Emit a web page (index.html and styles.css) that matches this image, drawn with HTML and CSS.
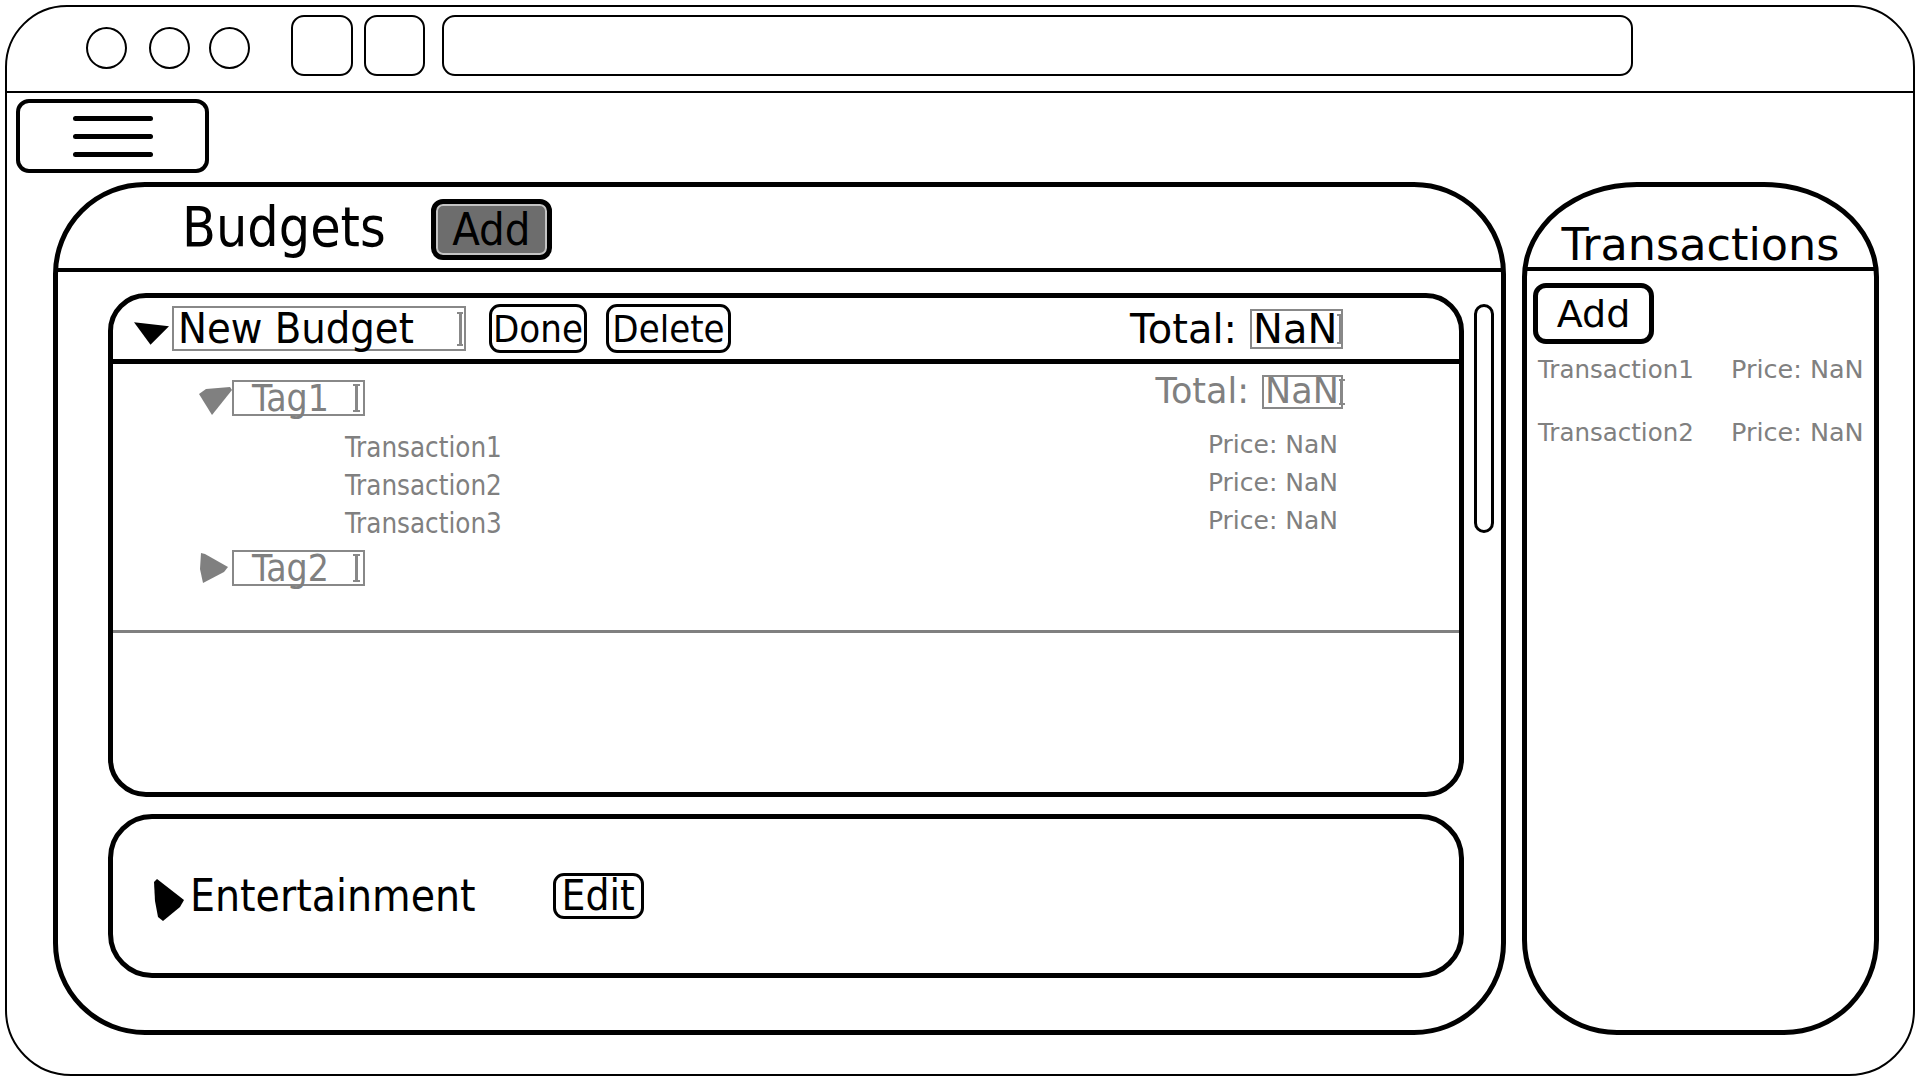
FILE: index.html
```html
<!DOCTYPE html>
<html lang="en">
<head>
<meta charset="utf-8">
<title>Budgets</title>
<link rel="stylesheet" href="styles.css">
</head>
<body>
<div class="window">
  <div class="titlebar">
    <span class="dot"></span><span class="dot d2"></span><span class="dot d3"></span>
    <span class="navbtn"></span><span class="navbtn n2"></span>
    <span class="address"></span>
  </div>
  <div class="page">
    <div class="menu"><span class="bar"></span><span class="bar"></span><span class="bar"></span></div>
    <div class="panels">
      <section class="budgets">
        <header class="budgets-head">
          <h1 class="budgets-title">Budgets</h1>
          <span class="add-dark">Add</span>
        </header>
        <div class="budgets-body">
          <div class="cards">
            <div class="card card-open">
              <div class="card-head">
                <svg class="tri-down" viewBox="0 0 36 23"><polygon points="0,0 36,4 17,23" fill="#000"/></svg>
                <span class="input name">New Budget<i class="caret"></i></span>
                <span class="btn done">Done</span>
                <span class="btn delete">Delete</span>
                <span class="total">Total:<span class="input nan">NaN<i class="caret"></i></span></span>
              </div>
              <div class="card-body">
                <div class="tag-row">
                  <svg class="tri-tag" viewBox="0 0 33 28"><polygon points="0,7 7,2 31,0 33,3 13,28" fill="#808080"/></svg>
                  <span class="input tag-input">Tag1<i class="caret"></i></span>
                  <span class="tag-total">Total:<span class="input nan-sm">NaN<i class="caret"></i></span></span>
                </div>
                <div class="tx-list">
                  <div class="tx"><span class="tx-name">Transaction1</span><span class="tx-price">Price: NaN</span></div>
                  <div class="tx"><span class="tx-name">Transaction2</span><span class="tx-price">Price: NaN</span></div>
                  <div class="tx"><span class="tx-name">Transaction3</span><span class="tx-price">Price: NaN</span></div>
                </div>
                <div class="tag-row tag-row2">
                  <svg class="tri-tag-right" viewBox="0 0 28 30"><polygon points="1,0 5,1 28,14 24,19 3,30 0,16" fill="#808080"/></svg>
                  <span class="input tag-input">Tag2<i class="caret"></i></span>
                </div>
                <div class="sep"></div>
              </div>
            </div>
            <div class="card card-closed">
              <svg class="tri-ent" viewBox="0 0 32 42"><polygon points="1,3 4,0 31,21 27,28 10,42 5,38 2,22" fill="#000"/></svg>
              <span class="ent-name">Entertainment</span>
              <span class="btn edit">Edit</span>
            </div>
          </div>
          <div class="scrollbar"></div>
        </div>
      </section>
      <section class="transactions">
        <header class="tx-head"><h2 class="tx-title">Transactions</h2></header>
        <span class="add-light">Add</span>
        <div class="side-list">
          <span class="side-name">Transaction1</span><span class="side-price">Price: NaN</span>
          <span class="side-name">Transaction2</span><span class="side-price">Price: NaN</span>
        </div>
      </section>
    </div>
  </div>
</div>
</body>
</html>
```

FILE: styles.css
```css
* { box-sizing: border-box; }
html, body { margin: 0; padding: 0; }
body {
  width: 1920px;
  height: 1080px;
  background: #fff;
  color: #000;
  font-family: "DejaVu Sans", sans-serif;
  overflow: hidden;
}

.window {
  margin: 5px;
  width: 1910px;
  height: 1071px;
  border: 2px solid #000;
  border-radius: 62px 62px 66px 66px;
  display: flex;
  flex-direction: column;
}

/* browser chrome */
.titlebar {
  flex: none;
  height: 86px;
  border-bottom: 2px solid #000;
  display: flex;
  align-items: flex-start;
  padding-left: 79px;
}
.dot {
  flex: none;
  width: 41px;
  height: 42px;
  margin-top: 20px;
  border: 2px solid #000;
  border-radius: 50%;
}
.dot.d2 { margin-left: 22px; }
.dot.d3 { margin-left: 19px; }
.navbtn {
  flex: none;
  width: 62px;
  height: 61px;
  margin-top: 8px;
  margin-left: 41px;
  border: 2px solid #000;
  border-radius: 13px;
}
.navbtn.n2 { width: 61px; margin-left: 11px; }
.address {
  flex: none;
  width: 1191px;
  height: 61px;
  margin-top: 8px;
  margin-left: 17px;
  border: 2px solid #000;
  border-radius: 13px;
}

.page {
  display: flex;
  flex-direction: column;
  padding: 6px 0 0 9px;
}
.menu {
  width: 193px;
  height: 74px;
  border: 4px solid #000;
  border-radius: 13px;
  display: flex;
  flex-direction: column;
  align-items: center;
  justify-content: center;
  gap: 13px;
}
.bar {
  width: 80px;
  height: 5px;
  background: #000;
  border-radius: 3px;
}

.panels {
  display: flex;
  gap: 16px;
  margin: 9px 0 0 37px;
  height: 853px;
}

/* budgets panel */
.budgets {
  flex: none;
  width: 1453px;
  height: 853px;
  border: 5px solid #000;
  border-radius: 92px;
  display: flex;
  flex-direction: column;
}
.budgets-head {
  flex: none;
  height: 85px;
  border-bottom: 4px solid #000;
  display: flex;
  align-items: center;
  padding-left: 124px;
}
.budgets-title {
  margin: 0;
  font-family: "DejaVu Sans Condensed", "DejaVu Sans", sans-serif;
  font-stretch: semi-condensed;
  font-weight: normal;
  font-size: 55px;
  line-height: 1;
}
.add-dark {
  margin-left: 45px;
  width: 121px;
  height: 61px;
  margin-top: 4px;
  border: 5px solid #000;
  border-radius: 12px;
  background: #6d6d6d;
  box-shadow: inset 0 0 0 2px #c4c4c4;
  display: flex;
  align-items: center;
  justify-content: center;
  font-family: "DejaVu Sans Condensed", "DejaVu Sans", sans-serif;
  font-stretch: semi-condensed;
  font-size: 45px;
  line-height: 1;
}

.budgets-body {
  display: flex;
  align-items: flex-start;
  padding: 21px 0 0 50px;
}
.cards {
  flex: none;
  width: 1356px;
  display: flex;
  flex-direction: column;
  gap: 17px;
}
.card {
  border: 5px solid #000;
}
.card-open {
  height: 504px;
  border-radius: 38px;
  display: flex;
  flex-direction: column;
}
.card-head {
  flex: none;
  height: 66px;
  border-bottom: 5px solid #000;
  display: flex;
  align-items: center;
  padding: 0 116px 0 21px;
}
.tri-down {
  flex: none;
  width: 35px;
  height: 23px;
  margin-top: 9px;
}
.input {
  flex: none;
  border: 2px solid #888;
  display: flex;
  align-items: center;
  line-height: 1;
}
.caret {
  flex: none;
  margin-left: auto;
  margin-right: 1px;
  width: 7px;
  height: 26px;
  border-top: 2px solid #888;
  border-bottom: 2px solid #888;
  background: linear-gradient(#888, #888) center / 3px 100% no-repeat;
}
.name {
  width: 294px;
  height: 45px;
  margin-left: 3px;
  padding-left: 4px;
  font-family: "DejaVu Sans Condensed", "DejaVu Sans", sans-serif;
  font-stretch: semi-condensed;
  font-size: 43px;
}
.name .caret { height: 34px; width: 6px; }
.btn {
  flex: none;
  height: 49px;
  border: 3px solid #000;
  border-radius: 11px;
  display: flex;
  align-items: center;
  justify-content: center;
  font-family: "DejaVu Sans Condensed", "DejaVu Sans", sans-serif;
  font-stretch: semi-condensed;
  font-size: 38px;
  line-height: 1;
}
.done { width: 98px; margin-left: 23px; }
.delete { width: 125px; margin-left: 19px; }
.total {
  margin-left: auto;
  display: flex;
  align-items: center;
  font-size: 40px;
  line-height: 1;
}
.nan {
  width: 93px;
  height: 40px;
  margin-left: 13px;
  padding-left: 1px;
  font-size: 40px;
}
.nan .caret { height: 30px; width: 6px; }

.card-body {
  padding-top: 16px;
  display: flex;
  flex-direction: column;
}
.tag-row {
  display: flex;
  align-items: center;
  height: 36px;
  padding: 0 116px 0 86px;
}
.tri-tag {
  flex: none;
  width: 33px;
  height: 28px;
  margin-top: 6px;
}
.tri-tag-right {
  flex: none;
  width: 28px;
  height: 30px;
  margin-left: 1px;
  margin-right: 4px;
}
.tag-input {
  width: 133px;
  height: 36px;
  padding-left: 18px;
  color: #808080;
  font-family: "DejaVu Sans Condensed", "DejaVu Sans", sans-serif;
  font-stretch: semi-condensed;
  font-size: 37px;
}
.tag-input .caret { margin-right: 3px; height: 28px; }
.tag-total {
  margin-left: auto;
  align-self: flex-start;
  margin-top: -6px;
  display: flex;
  align-items: center;
  color: #808080;
  font-size: 35px;
  line-height: 1;
}
.nan-sm {
  width: 81px;
  height: 34px;
  margin-left: 13px;
  padding-left: 1px;
  color: #808080;
  font-size: 35px;
}
.nan-sm .caret { height: 26px; width: 6px; }

.tx-list {
  display: flex;
  flex-direction: column;
  margin-top: 12px;
  padding: 0 121px 0 232px;
  color: #808080;
}
.tx {
  height: 38px;
  display: flex;
  align-items: center;
  justify-content: space-between;
}
.tx-name {
  font-family: "DejaVu Sans Condensed", "DejaVu Sans", sans-serif;
  font-stretch: semi-condensed;
  font-size: 27.5px;
}
.tx-price {
  font-size: 25px;
  margin-bottom: 5px;
}
.tag-row2 { margin-top: 8px; }
.sep {
  margin-top: 44px;
  height: 3px;
  background: #808080;
}

.card-closed {
  height: 164px;
  border-radius: 44px;
  display: flex;
  align-items: center;
  padding-left: 40px;
}
.tri-ent {
  flex: none;
  width: 32px;
  height: 42px;
  margin-top: 8px;
}
.ent-name {
  margin-left: 5px;
  font-family: "DejaVu Sans Condensed", "DejaVu Sans", sans-serif;
  font-stretch: semi-condensed;
  font-size: 44px;
  line-height: 1;
}
.edit {
  width: 91px;
  height: 46px;
  margin-left: 77px;
  font-size: 42px;
}

.scrollbar {
  flex: none;
  width: 20px;
  height: 229px;
  margin: 11px 0 0 10px;
  border: 3px solid #000;
  border-radius: 10px;
}

/* transactions panel */
.transactions {
  flex: none;
  width: 357px;
  height: 853px;
  border: 5px solid #000;
  border-radius: 115px 115px 95px 95px / 95px 95px 95px 95px;
  display: flex;
  flex-direction: column;
}
.tx-head {
  flex: none;
  height: 84px;
  border-bottom: 4px solid #000;
  display: flex;
  justify-content: center;
  align-items: flex-end;
}
.tx-title {
  margin: 0;
  font-weight: normal;
  font-size: 44.5px;
  line-height: 44px;
}
.add-light {
  align-self: flex-start;
  margin: 12px 0 0 6px;
  width: 121px;
  height: 61px;
  border: 5px solid #000;
  border-radius: 13px;
  display: flex;
  align-items: center;
  justify-content: center;
  font-size: 38px;
  line-height: 1;
}
.side-list {
  display: grid;
  grid-template-columns: 193px auto;
  grid-auto-rows: 30px;
  row-gap: 33px;
  align-items: center;
  margin-top: 10px;
  padding-left: 11px;
  color: #808080;
}
.side-name { font-size: 24.5px; }
.side-price { font-size: 25.5px; }
```
